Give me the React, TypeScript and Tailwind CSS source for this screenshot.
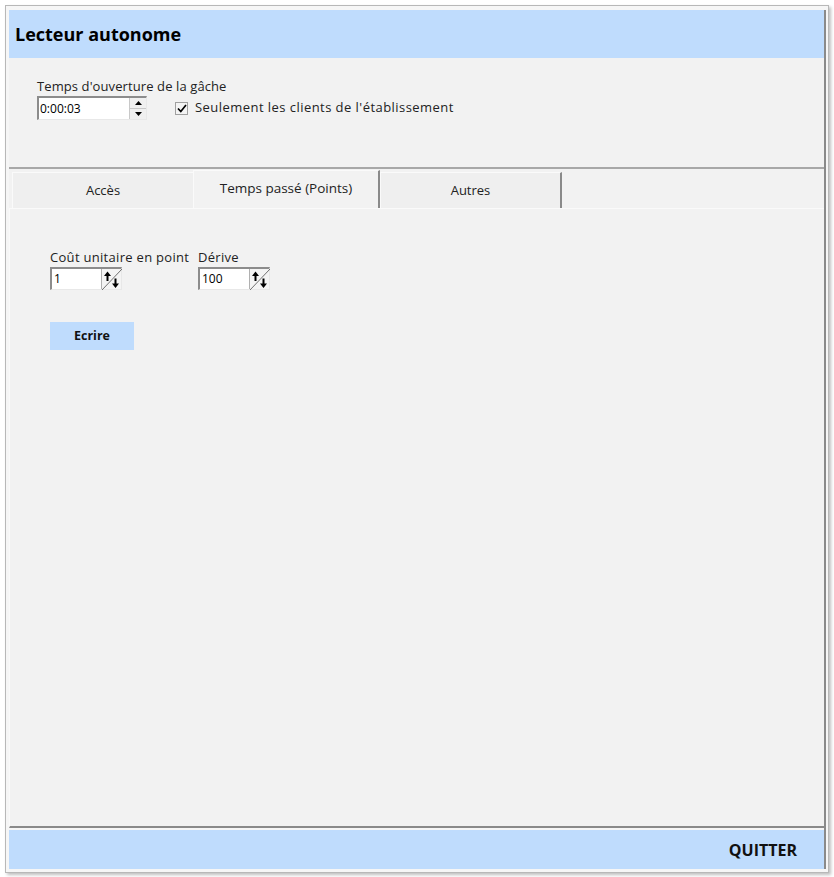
import React from "react";

function SpinDiag() {
  return (
    <div className="relative w-[20px] h-full border-l border-[#b0b0b0] bg-[#f4f4f4]">
      <svg width="20" height="21" viewBox="0 0 20 21" className="absolute inset-0">
        <line x1="0" y1="21" x2="20" y2="0" stroke="#707070" strokeWidth="1" />
        <path d="M5.5 2.5 L2 7 L4.5 7 L4.5 12 L6.5 12 L6.5 7 L9 7 Z" fill="#000" />
        <path d="M13.5 19 L10 14.5 L12.5 14.5 L12.5 9.5 L14.5 9.5 L14.5 14.5 L17 14.5 Z" fill="#000" />
      </svg>
    </div>
  );
}

function NumField({ value }: { value: string }) {
  return (
    <div className="flex h-[23px] w-[72px] border-t-2 border-l-2 border-[#8c8c8c] border-r border-b border-r-[#e8e8e8] border-b-[#e8e8e8] bg-white">
      <div className="flex-1 pl-[2px] text-[12px] leading-[20px] text-black">{value}</div>
      <SpinDiag />
    </div>
  );
}

export default function App() {
  const font = { fontFamily: '"Open Sans", "Noto Sans", sans-serif' };
  return (
    <div className="w-[834px] h-[877px] bg-white pt-[5px] pl-[5px]" style={font}>
      <div className="w-[824px] h-[868px] border border-[#b8b8b8] shadow-[2px_2px_3px_rgba(0,0,0,0.25)] bg-[#f6f6f6] pt-[4px] pl-[3px] pr-[2px] pb-[3px] flex flex-col">
        <div className="flex flex-col flex-1 border-r-2 border-[#8a8a8a]">
          {/* Header */}
          <div className="h-[48px] bg-[#bfdcfd] flex items-center pl-[6px]">
            <span className="text-[18px] font-bold text-black tracking-[0px]">Lecteur autonome</span>
          </div>
          {/* Top section */}
          <div className="h-[111px] bg-[#f2f2f2] pl-[28px] pt-[20px] border-b-2 border-[#a8a8a8]">
            <div className="text-[13px] leading-[17px] text-[#222] tracking-[0.1px]">Temps d'ouverture de la gâche</div>
            <div className="flex items-center mt-[1px]">
              <div className="flex h-[24px] w-[110px] border-t-2 border-l-2 border-[#8c8c8c] border-r border-b border-r-[#e8e8e8] border-b-[#e8e8e8] bg-white">
                <div className="flex-1 pl-[1px] text-[12px] leading-[21px] text-black">0:00:03</div>
                <div className="w-[17px] flex flex-col border-l border-[#c8c8c8] bg-[#f0f0f0]">
                  <div className="flex-1 flex items-center justify-center border-b border-[#c8c8c8]">
                    <svg width="7" height="4" viewBox="0 0 7 4"><path d="M3.5 0 L7 4 L0 4 Z" fill="#000" /></svg>
                  </div>
                  <div className="flex-1 flex items-center justify-center">
                    <svg width="7" height="4" viewBox="0 0 7 4"><path d="M0 0 L7 0 L3.5 4 Z" fill="#000" /></svg>
                  </div>
                </div>
              </div>
              <div className="ml-[28px] w-[13px] h-[13px] border border-[#a0a0a0] bg-[#f4f4f4] flex items-center justify-center">
                <svg width="10" height="9" viewBox="0 0 10 9"><path d="M1 4.5 L3.8 7.5 L9 1" stroke="#000" strokeWidth="1.7" fill="none" /></svg>
              </div>
              <span className="ml-[7px] text-[13px] text-[#222] tracking-[0.45px]">Seulement les clients de l'établissement</span>
            </div>
          </div>
          {/* Tabs */}
          <div className="bg-[#f2f2f2] flex-1 flex flex-col pt-[1px]">
            <div className="flex items-end h-[38px] pl-[3px]">
              <div className="w-[181px] h-[36px] bg-[#efefef] border-t border-l border-[#fafafa] flex items-center justify-center text-[13px] text-[#222] pt-[1px]">Accès</div>
              <div className="w-[187px] h-[38px] bg-[#f2f2f2] border-t border-l border-[#fafafa] border-r-2 border-r-[#8a8a8a] flex items-start pt-[7px] justify-center text-[13.5px] text-[#222]">Temps passé (Points)</div>
              <div className="w-[182px] h-[36px] bg-[#efefef] border-t border-l border-[#fafafa] border-r-2 border-r-[#8a8a8a] flex items-center justify-center text-[13px] text-[#222] pt-[1px]">Autres</div>
            </div>
            <div className="flex-1 border-t border-l border-[#fafafa] border-b-2 border-b-[#8a8a8a] pl-[40px] pt-[39px]">
              <div className="flex">
                <div className="flex flex-col w-[148px]">
                  <span className="text-[13px] leading-[18px] text-[#222] tracking-[0.3px] whitespace-nowrap">Coût unitaire en point</span>
                  <div className="mt-[1px]"><NumField value="1" /></div>
                </div>
                <div className="flex flex-col">
                  <span className="text-[13px] leading-[18px] text-[#222] tracking-[0.3px]">Dérive</span>
                  <div className="mt-[1px]"><NumField value="100" /></div>
                </div>
              </div>
              <button className="mt-[32px] w-[84px] h-[28px] bg-[#bfdcfd] text-[12.5px] font-bold text-[#111]">Ecrire</button>
            </div>
          </div>
          {/* Footer */}
          <div className="h-[39px] bg-[#bfdcfd] flex items-center justify-end pr-[27px] mt-[2px]">
            <span className="text-[16px] font-bold text-[#111]">QUITTER</span>
          </div>
        </div>
      </div>
    </div>
  );
}
